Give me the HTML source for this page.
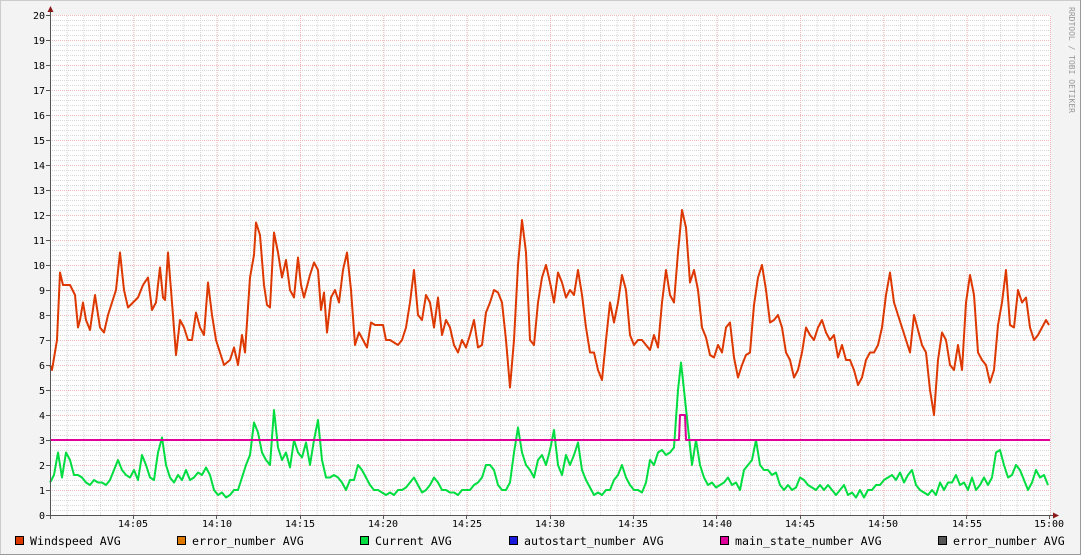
<!DOCTYPE html>
<html><head><meta charset="utf-8"><style>
html,body{margin:0;padding:0;background:#f3f3f3;}
svg{display:block;}
text{font-family:"DejaVu Sans Mono","Liberation Mono",monospace;font-size:10px;fill:#000;}
.lg{font-size:11.6px;}
</style></head><body>
<svg width="1081" height="555" viewBox="0 0 1081 555" xmlns="http://www.w3.org/2000/svg">
<defs>
<pattern id="mh" x="0" y="15" width="1000" height="5" patternUnits="userSpaceOnUse"><line x1="0" y1="0.5" x2="1000" y2="0.5" stroke="#d8d8d8" stroke-width="1" stroke-dasharray="1,1"/></pattern>
<pattern id="mv" x="50" y="0" width="16.6667" height="600" patternUnits="userSpaceOnUse"><line x1="0.5" y1="0" x2="0.5" y2="600" stroke="#d8d8d8" stroke-width="1" stroke-dasharray="1,1"/></pattern>
<pattern id="Mh" x="0" y="15" width="1000" height="25" patternUnits="userSpaceOnUse"><line x1="0" y1="0.5" x2="1000" y2="0.5" stroke="#f0b8b8" stroke-width="1" stroke-dasharray="1,1"/></pattern>
<pattern id="Mv" x="50" y="0" width="83.333" height="600" patternUnits="userSpaceOnUse"><line x1="0.5" y1="0" x2="0.5" y2="600" stroke="#f0b8b8" stroke-width="1" stroke-dasharray="1,1"/></pattern>
</defs>
<rect x="0" y="0" width="1081" height="555" fill="#f3f3f3"/>
<rect x="0.5" y="0.5" width="1080" height="554" fill="none" stroke="#ccc"/>
<line x1="0" y1="554.5" x2="1081" y2="554.5" stroke="#999"/>
<line x1="1080.5" y1="0" x2="1080.5" y2="555" stroke="#999"/>
<rect x="50" y="15" width="1000" height="500" fill="#fff"/>
<rect x="51" y="15" width="999" height="500" fill="url(#mv)"/>
<rect x="51" y="15" width="999" height="500" fill="url(#mh)"/>
<rect x="51" y="15" width="1000" height="500" fill="url(#Mv)"/>
<rect x="51" y="15" width="999" height="500" fill="url(#Mh)"/>
<g transform="translate(0,515) scale(1,-25)" fill="none" stroke-linejoin="round">
<polyline vector-effect="non-scaling-stroke" stroke="#dd3800" stroke-width="2" points="50,6 52,5.8 57,7 60,9.7 63,9.2 70,9.2 75,8.8 78,7.5 80,7.8 83,8.5 86,7.8 90,7.4 95,8.8 100,7.5 104,7.3 108,8 112,8.5 116,9 120,10.5 124,9 128,8.3 133,8.5 138,8.7 143,9.2 148,9.5 152,8.2 156,8.5 160,9.9 163,8.7 165,8.6 168,10.5 172,8.5 176,6.4 180,7.8 184,7.5 188,7 192,7 196,8.1 200,7.5 204,7.2 208,9.3 212,8 216,7 220,6.5 224,6 230,6.2 234,6.7 238,6 242,7.2 245,6.5 250,9.5 254,10.4 256,11.7 260,11.2 264,9.2 267,8.4 270,8.3 274,11.3 278,10.5 282,9.5 286,10.2 290,9 294,8.7 298,10.3 301,9.2 304,8.7 310,9.6 314,10.1 318,9.8 321,8.2 324,8.9 327,7.3 331,8.7 335,9 339,8.5 343,9.8 347,10.5 351,9 355,6.8 359,7.3 363,7 367,6.7 371,7.7 375,7.6 379,7.6 383,7.6 386,7 390,7 394,6.9 398,6.8 402,7 406,7.5 410,8.5 414,9.8 418,8 422,7.8 426,8.8 430,8.5 434,7.5 438,8.7 442,7.2 446,7.8 450,7.5 454,6.8 458,6.5 462,7 466,6.7 470,7.2 474,7.8 478,6.7 482,6.8 486,8.1 490,8.5 494,9 498,8.9 502,8.5 506,7 510,5.1 514,7 518,10 522,11.8 526,10.5 530,7 534,6.8 538,8.5 542,9.5 546,10 550,9.3 554,8.5 558,9.7 562,9.3 566,8.7 570,9 574,8.8 578,9.8 582,8.8 586,7.5 590,6.5 594,6.5 598,5.8 602,5.4 606,7 610,8.5 614,7.7 618,8.5 622,9.6 626,9 630,7.2 634,6.8 638,7 642,7 646,6.8 650,6.6 654,7.2 658,6.7 662,8.5 666,9.8 670,8.8 674,8.5 678,10.5 682,12.2 686,11.5 690,9.3 694,9.8 698,9 702,7.5 706,7.1 710,6.4 714,6.3 718,6.8 722,6.5 726,7.5 730,7.7 734,6.3 738,5.5 742,6 746,6.4 750,6.5 754,8.4 758,9.5 762,10 766,9 770,7.7 774,7.8 778,8 782,7.5 786,6.5 790,6.2 794,5.5 798,5.8 802,6.5 806,7.5 810,7.2 814,7 818,7.5 822,7.8 826,7.3 830,7 834,7.2 838,6.3 842,6.8 846,6.2 850,6.2 854,5.8 858,5.2 862,5.5 866,6.2 870,6.5 874,6.5 878,6.8 882,7.5 886,8.8 890,9.7 894,8.5 898,8 902,7.5 906,7 910,6.5 914,8 918,7.4 922,6.8 926,6.5 930,5 934,4 938,6.2 942,7.3 946,7 950,6 954,5.8 958,6.8 962,5.8 966,8.5 970,9.6 974,8.8 978,6.5 982,6.2 986,6 990,5.3 994,5.8 998,7.6 1002,8.5 1006,9.8 1010,7.6 1014,7.5 1018,9 1022,8.5 1026,8.7 1030,7.5 1034,7 1038,7.2 1042,7.5 1046,7.8 1049,7.6"/>
<polyline vector-effect="non-scaling-stroke" stroke="#00dd40" stroke-width="2" points="50,1.3 54,1.6 58,2.5 62,1.5 66,2.5 70,2.2 74,1.6 78,1.6 82,1.5 86,1.3 90,1.2 94,1.4 98,1.3 102,1.3 106,1.2 110,1.4 114,1.8 118,2.2 122,1.8 126,1.6 130,1.5 134,1.8 138,1.4 142,2.4 146,2 150,1.5 154,1.4 158,2.5 162,3.1 166,2 170,1.5 174,1.3 178,1.6 182,1.4 186,1.8 190,1.4 194,1.5 198,1.7 202,1.6 206,1.9 210,1.6 214,1 218,0.8 222,0.9 226,0.7 230,0.8 234,1 238,1 242,1.5 246,2 250,2.4 254,3.7 258,3.3 262,2.5 266,2.2 270,2 274,4.2 278,2.7 282,2.2 286,2.5 290,1.9 294,3 298,2.5 302,2.3 306,2.9 310,2 314,3 318,3.8 322,2.2 326,1.5 330,1.5 334,1.6 338,1.5 342,1.3 346,1 350,1.4 354,1.4 358,2 362,1.8 366,1.5 370,1.2 374,1 378,1 382,0.9 386,0.8 390,0.9 394,0.8 398,1 402,1 406,1.1 410,1.3 414,1.5 418,1.2 422,0.9 426,1 430,1.2 434,1.5 438,1.3 442,1 446,1 450,0.9 454,0.9 458,0.8 462,1 466,1 470,1 474,1.2 478,1.3 482,1.5 486,2 490,2 494,1.8 498,1.2 502,1 506,1 510,1.3 514,2.5 518,3.5 522,2.5 526,2 530,1.8 534,1.5 538,2.2 542,2.4 546,2 550,2.6 554,3.4 558,2 562,1.6 566,2.4 570,2 574,2.4 578,2.9 582,1.8 586,1.4 590,1.1 594,0.8 598,0.9 602,0.8 606,1 610,1 614,1.4 618,1.6 622,2 626,1.5 630,1.2 634,1 638,1 642,0.9 646,1.3 650,2.2 654,2 658,2.5 662,2.6 666,2.4 670,2.5 674,2.7 678,5 681,6.1 684,5 688,3.5 692,2 696,3 700,2 704,1.5 708,1.2 712,1.3 716,1.1 720,1.2 724,1.3 728,1.5 732,1.2 736,1.3 740,1 744,1.8 748,2 752,2.2 756,3 760,2 764,1.8 768,1.8 772,1.6 776,1.7 780,1.2 784,1 788,1.2 792,1 796,1.1 800,1.5 804,1.4 808,1.2 812,1.1 816,1 820,1.2 824,1 828,1.2 832,1 836,0.8 840,1 844,1.2 848,0.8 852,0.9 856,0.7 860,1 864,0.7 868,1 872,1 876,1.2 880,1.2 884,1.4 888,1.5 892,1.6 896,1.4 900,1.7 904,1.3 908,1.6 912,1.8 916,1.2 920,1 924,0.9 928,0.8 932,1 936,0.8 940,1.3 944,1 948,1.3 952,1.3 956,1.6 960,1.2 964,1.3 968,1 972,1.5 976,1 980,1.2 984,1.5 988,1.2 992,1.5 996,2.5 1000,2.6 1004,2 1008,1.5 1012,1.6 1016,2 1020,1.8 1024,1.4 1028,1 1032,1.3 1036,1.8 1040,1.5 1044,1.6 1048,1.2"/>
<polyline vector-effect="non-scaling-stroke" stroke="#dd0099" stroke-width="2" points="50,3 679,3 680,4 685,4 686,3 1050,3"/>
</g>
<line x1="50.5" y1="10" x2="50.5" y2="519" stroke="#555"/>
<polygon points="47.5,12 53.5,12 50.5,6" fill="#8b1a1a"/>
<line x1="46" y1="515.5" x2="1055" y2="515.5" stroke="#555"/>
<polygon points="1053,512.5 1053,518.5 1059,515.5" fill="#8b1a1a"/>
<g stroke="#555">
<line x1="46" y1="15.5" x2="50" y2="15.5"/><line x1="46" y1="40.5" x2="50" y2="40.5"/><line x1="46" y1="65.5" x2="50" y2="65.5"/><line x1="46" y1="90.5" x2="50" y2="90.5"/><line x1="46" y1="115.5" x2="50" y2="115.5"/><line x1="46" y1="140.5" x2="50" y2="140.5"/><line x1="46" y1="165.5" x2="50" y2="165.5"/><line x1="46" y1="190.5" x2="50" y2="190.5"/><line x1="46" y1="215.5" x2="50" y2="215.5"/><line x1="46" y1="240.5" x2="50" y2="240.5"/><line x1="46" y1="265.5" x2="50" y2="265.5"/><line x1="46" y1="290.5" x2="50" y2="290.5"/><line x1="46" y1="315.5" x2="50" y2="315.5"/><line x1="46" y1="340.5" x2="50" y2="340.5"/><line x1="46" y1="365.5" x2="50" y2="365.5"/><line x1="46" y1="390.5" x2="50" y2="390.5"/><line x1="46" y1="415.5" x2="50" y2="415.5"/><line x1="46" y1="440.5" x2="50" y2="440.5"/><line x1="46" y1="465.5" x2="50" y2="465.5"/><line x1="46" y1="490.5" x2="50" y2="490.5"/>
<line x1="133.5" y1="515" x2="133.5" y2="519"/><line x1="216.5" y1="515" x2="216.5" y2="519"/><line x1="300.5" y1="515" x2="300.5" y2="519"/><line x1="383.5" y1="515" x2="383.5" y2="519"/><line x1="466.5" y1="515" x2="466.5" y2="519"/><line x1="550.5" y1="515" x2="550.5" y2="519"/><line x1="633.5" y1="515" x2="633.5" y2="519"/><line x1="716.5" y1="515" x2="716.5" y2="519"/><line x1="800.5" y1="515" x2="800.5" y2="519"/><line x1="883.5" y1="515" x2="883.5" y2="519"/><line x1="966.5" y1="515" x2="966.5" y2="519"/><line x1="1049.5" y1="515" x2="1049.5" y2="519"/>
</g>
<g text-anchor="end">
<text x="45" y="19">20</text><text x="45" y="44">19</text><text x="45" y="69">18</text><text x="45" y="94">17</text><text x="45" y="119">16</text><text x="45" y="144">15</text><text x="45" y="169">14</text><text x="45" y="194">13</text><text x="45" y="219">12</text><text x="45" y="244">11</text><text x="45" y="269">10</text><text x="45" y="294">9</text><text x="45" y="319">8</text><text x="45" y="344">7</text><text x="45" y="369">6</text><text x="45" y="394">5</text><text x="45" y="419">4</text><text x="45" y="444">3</text><text x="45" y="469">2</text><text x="45" y="494">1</text><text x="45" y="519">0</text>
</g>
<g text-anchor="middle">
<text x="133" y="527">14:05</text><text x="217" y="527">14:10</text><text x="300" y="527">14:15</text><text x="383" y="527">14:20</text><text x="467" y="527">14:25</text><text x="550" y="527">14:30</text><text x="633" y="527">14:35</text><text x="717" y="527">14:40</text><text x="800" y="527">14:45</text><text x="883" y="527">14:50</text><text x="967" y="527">14:55</text><text x="1049" y="527">15:00</text>
</g>
<g stroke="#000" stroke-width="1">
<rect x="15.5" y="536.5" width="8" height="8" fill="#dd3800"/>
<rect x="177.5" y="536.5" width="8" height="8" fill="#dd7700"/>
<rect x="360.5" y="536.5" width="8" height="8" fill="#00dd40"/>
<rect x="509.5" y="536.5" width="8" height="8" fill="#1a1add"/>
<rect x="720.5" y="536.5" width="8" height="8" fill="#dd0099"/>
<rect x="938.5" y="536.5" width="8" height="8" fill="#555"/>
</g>
<text class="lg" x="30" y="545">Windspeed AVG</text>
<text class="lg" x="192" y="545">error_number AVG</text>
<text class="lg" x="375" y="545">Current AVG</text>
<text class="lg" x="524" y="545">autostart_number AVG</text>
<text class="lg" x="735" y="545">main_state_number AVG</text>
<text class="lg" x="953" y="545">error_number AVG</text>
<text transform="translate(1069,7) rotate(90)" style="font-size:8px;fill:#999">RRDTOOL / TOBI OETIKER</text>
</svg>
</body></html>
